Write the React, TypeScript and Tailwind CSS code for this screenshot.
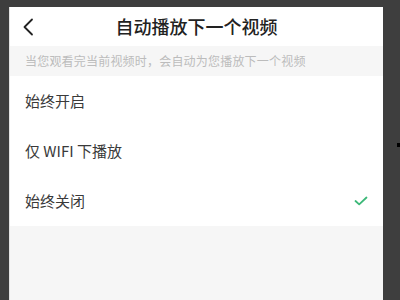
import React from 'react';

const options = [
  { label: '始终开启', checked: false },
  { label: '仅 WIFI 下播放', checked: false },
  { label: '始终关闭', checked: true },
];

const App: React.FC = () => {
  return (
    <div
      className="relative w-[400px] h-[300px] overflow-hidden bg-[#3e3e3e] pt-[7px] pl-[9px] pr-[17px] flex"
      style={{ fontFamily: '"Noto Sans CJK SC", "Noto Sans", sans-serif' }}
    >
      <div className="flex-1 flex flex-col bg-[#f6f6f6] border-l border-[#e2e2e2]">
        {/* Header */}
        <div className="relative h-[39px] bg-white flex items-center justify-center">
          <svg
            className="absolute left-[12px] top-[11px]"
            width="12"
            height="18"
            viewBox="0 0 12 18"
            fill="none"
          >
            <path d="M10 1.5 L2.5 9 L10 16.5" stroke="#222" strokeWidth="1.8" strokeLinecap="round" strokeLinejoin="round" />
          </svg>
          <h1 className="text-[18px] font-medium text-[#222]">自动播放下一个视频</h1>
        </div>

        {/* Hint */}
        <div className="h-[30px] flex items-center px-[15px] text-[12px] tracking-[0.2px] text-[#bcbcbc]">
          当您观看完当前视频时，会自动为您播放下一个视频
        </div>

        {/* Options */}
        <div className="bg-white">
          {options.map((o) => (
            <div key={o.label} className="h-[50px] flex items-center justify-between pl-[15px] pr-[15px]">
              <span className="text-[15px] text-[#3a3a3a]">{o.label}</span>
              {o.checked && (
                <svg width="14" height="10" viewBox="0 0 14 10" fill="none">
                  <path d="M1.5 5 L5.2 8.3 L12.5 1.5" stroke="#3cb878" strokeWidth="1.8" strokeLinecap="round" strokeLinejoin="round" />
                </svg>
              )}
            </div>
          ))}
        </div>
      </div>
      <span className="absolute left-[397px] top-[143px] w-[3px] h-[4px] bg-black" />
    </div>
  );
};

export default App;
